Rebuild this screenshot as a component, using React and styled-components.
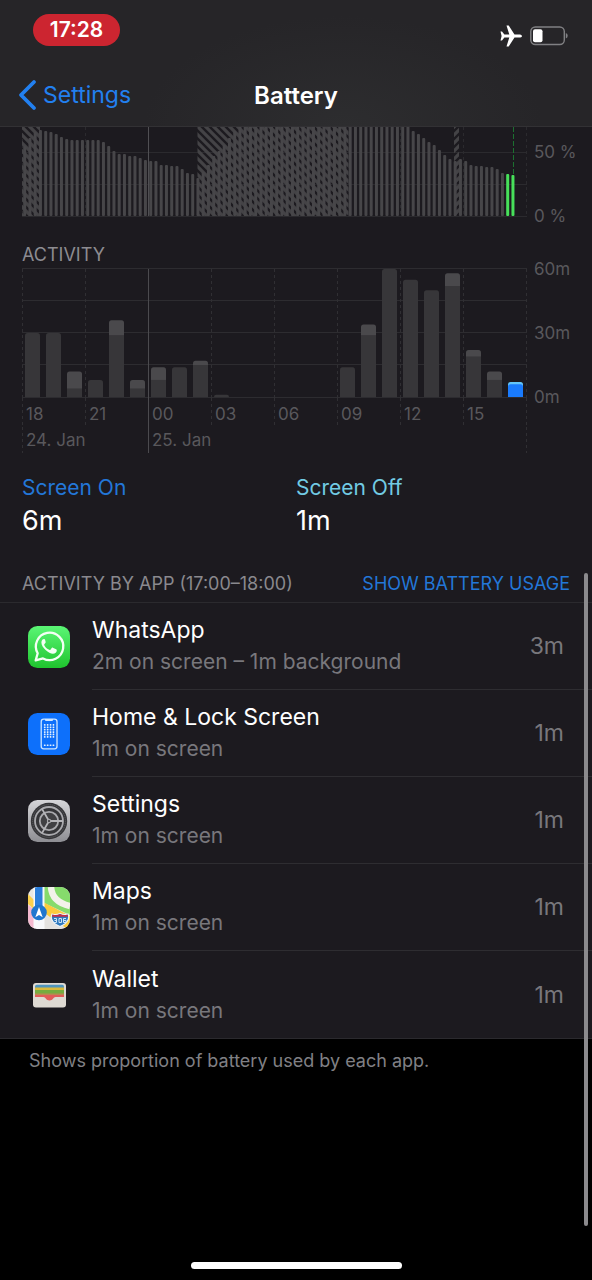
import React from "react";
import styled, { createGlobalStyle } from "styled-components";

const GlobalStyle = createGlobalStyle`
  * { box-sizing: border-box; }
  html { scrollbar-width: none; }
  body { margin: 0; background: #000; }
  button { font: inherit; border: 0; padding: 0; background: none; cursor: pointer; }
`;

const Screen = styled.div`
  position: relative;
  display: flex;
  flex-direction: column;
  min-height: 100vh;
  background: #000;
  color: #fff;
  font-family: Inter, "Liberation Sans", sans-serif;
`;

const Header = styled.header`
  background: radial-gradient(ellipse 200px 110px at 58% 100%, #2d2d2f, #262528);
  border-bottom: 1px solid #323134;
`;

const StatusBar = styled.div`
  display: flex;
  justify-content: space-between;
  align-items: flex-start;
  height: 64px;
  padding: 14px 24px 0 33px;
`;

const TimePill = styled.time`
  width: 87px;
  border-radius: 16px;
  background: #cc2530;
  font-size: 21px;
  font-weight: 600;
  line-height: 32px;
  text-align: center;
`;

const StatusIcons = styled.div`
  display: flex;
  align-items: center;
  gap: 8px;
  height: 44px;
`;

const NavBar = styled.nav`
  display: grid;
  grid-template-columns: 1fr auto 1fr;
  align-items: center;
  height: 62px;
  padding: 0 18px;
`;

const BackLink = styled.a`
  display: flex;
  align-items: center;
  gap: 6px;
  color: #2280f0;
  font-size: 23px;
  text-decoration: none;
`;

const NavTitle = styled.h1`
  margin: 0;
  font-size: 24px;
  font-weight: 600;
`;

const Panel = styled.main`
  background: #1c1a1f;
  border-bottom: 1px solid #2b2a2e;
`;

const ChartRow = styled.div`
  display: grid;
  grid-template-columns: minmax(0, 1fr) 65px;
  padding-left: 22px;
`;

const Plot = styled.svg`
  display: block;
  width: 100%;
`;

const Axis = styled.div`
  display: flex;
  flex-direction: column;
  justify-content: ${(p) => (p.$end ? "flex-end" : "space-between")};
  gap: ${(p) => (p.$end ? 44 : 0)}px;
  margin: -9px 0;
  padding-left: 7px;
  color: #59585c;
  font-size: 17px;
  line-height: 20px;
`;

const ChartTitle = styled.h2`
  margin: 0;
  padding: 28px 22px 3px;
  color: #8d8c91;
  font-size: 18px;
  font-weight: 400;
  line-height: 20px;
`;

const Ticks = styled.div`
  display: grid;
  grid-template-columns: repeat(${(p) => p.$columns}, 1fr) 1px;
  color: #59585c;
  font-size: 17px;
  line-height: 20px;
`;

const tickLines = {
  none: "none",
  solid: "linear-gradient(#4b4a4e, #4b4a4e)",
  dashed: "repeating-linear-gradient(#302f33 0 3px, transparent 3px 6px)",
};

const Tick = styled.span`
  height: ${(p) => p.$height}px;
  padding: ${(p) => p.$height - 23}px 0 0 4px;
  white-space: nowrap;
  background: ${(p) => tickLines[p.$line || "dashed"]} left / 1px 100% no-repeat;
`;

const Totals = styled.dl`
  display: grid;
  grid-template-columns: 1fr 1fr;
  margin: 0;
  padding: 22px 22px 24px;
`;

const Total = styled.div`
  dt {
    color: ${(p) => p.$color};
    font-size: 21px;
    line-height: 26px;
  }
  dd {
    margin: 0;
    font-size: 27px;
    line-height: 40px;
  }
`;

const ListHeader = styled.div`
  display: flex;
  justify-content: space-between;
  align-items: center;
  height: 38px;
  padding: 0 22px;
  border-bottom: 1px solid #2b2a2e;
  font-size: 18px;
  color: #8a898e;
`;

const ListTitle = styled.h2`
  margin: 0;
  font-size: inherit;
  font-weight: 400;
`;

const UsageButton = styled.button`
  color: #2377d8;
`;

const AppList = styled.ul`
  margin: 0;
  padding: 0;
  list-style: none;
`;

const AppRow = styled.li`
  display: flex;
  gap: 22px;
  padding-left: 28px;
  > svg { margin-top: 23px; }
`;

const AppBody = styled.div`
  display: flex;
  flex: 1;
  justify-content: space-between;
  align-items: center;
  height: 87px;
  padding-right: 28px;
  border-bottom: ${(p) => (p.$last ? 0 : 1)}px solid #2e2d31;
`;

const AppName = styled.div`
  font-size: 23px;
  line-height: 32px;
`;

const AppDetail = styled.div`
  color: #78777c;
  font-size: 21px;
  line-height: 32px;
`;

const AppTime = styled.div`
  color: #78777c;
  font-size: 23px;
`;

const Footnote = styled.p`
  margin: 0;
  padding: 10px 29px;
  color: #808085;
  font-size: 18px;
  line-height: 24px;
`;

const HomeIndicator = styled.div`
  width: 211px;
  height: 7px;
  margin: auto auto 11px;
  border-radius: 4px;
  background: #fff;
`;

const ScrollThumb = styled.div`
  position: absolute;
  top: 573px;
  right: 4px;
  bottom: 54px;
  width: 4px;
  border-radius: 2px;
  background: #8b8a8d;
`;

/* Height of each quarter-hour battery bar, from 18:00; 91 reaches past the top edge. */
const levels = [
  70, 78, 84, 86, 85, 84, 82, 79, 77, 76, 76, 76, 76, 76, 76, 74, 70, 65, 62, 62,
  60, 60, 58, 56, 55, 55, 51, 51, 50, 50, 47, 43, 42, 38, 44, 51, 60, 65, 71, 78,
  85, ...Array(32).fill(91), 91, 85, 82, 78, 74, 71, 66, 61, 57, 55, 57, 55, 51, 50,
  50, 49, 49, 47, 43, 42, 41,
];

function BatteryLevelChart() {
  return (
    <Plot viewBox="0 0 505 90" role="img" aria-label="Battery level">
      <defs>
        <pattern id="charging" width="8" height="8" patternUnits="userSpaceOnUse">
          <path d="M-2 -2L10 10M-2 6L2 10M6 -2L10 2" stroke="#444346" strokeWidth="3.2" />
        </pattern>
        <pattern id="charged" width="8" height="8" patternUnits="userSpaceOnUse">
          <path d="M-2 10L10 -2M-2 2L2 -2M6 10L10 6" stroke="#444346" strokeWidth="3.2" />
        </pattern>
      </defs>
      <g stroke="#2b2a2e">
        <path d="M0 25.5H505M0 57.5H505M0 89.5H505" />
        <path d="M.5 0V89M63.5 0V89M378.5 0V89M441.5 0V89M504.5 0V89" strokeDasharray="3 3" />
      </g>
      <rect x="0" y="0" width="18" height="89" fill="url(#charging)" />
      <rect x="175.5" y="0" width="151" height="89" fill="url(#charging)" />
      <rect x="432" y="0" width="5" height="89" fill="url(#charged)" />
      {levels.map((level, i) => (
        <rect
          key={i}
          x={1.2 + i * 5.25}
          y={89 - level}
          width="3"
          height={level}
          rx="1"
          fill={i > 91 ? "#47e05a" : "#474649"}
        />
      ))}
      <path d="M126.5 0V89" stroke="#504f53" />
      <path d="M491.5 0V47" stroke="#1c7030" strokeDasharray="5 2" />
    </Plot>
  );
}

/* Minutes per hour: [screen on, screen off]. */
const activity = [
  [30, 0], [30, 0], [4, 8], [8, 0], [29, 7], [4, 4], [8, 6], [14, 0],
  [15, 2], [1, 0], [0, 0], [0, 0], [0, 0], [0, 0], [0, 0], [14, 0],
  [29, 5], [60, 0], [55, 0], [50, 0], [52, 6], [19, 3], [8, 4], [6, 1],
];

function ActivityBar({ index, on, off }) {
  const scale = 128 / 60;
  const x = 3 + index * 21;
  const total = (on + off) * scale;
  const top = 129 - total;
  const selected = index === 23;
  if (!total) return null;
  const shape = (y) => {
    const r = Math.min(2.5, 129 - y);
    return `M${x} 129V${y + r}q0 ${-r} ${r} ${-r}h${15 - 2 * r}q${r} 0 ${r} ${r}V129z`;
  };
  return (
    <>
      {off > 0 && <path d={shape(top)} fill={selected ? "#63c6fa" : "#4a494c"} />}
      <path
        d={off > 0 && !selected ? `M${x} 129v${-on * scale}h15V129z` : shape(129 - on * scale)}
        fill={selected ? "#1a7bfd" : "#373639"}
      />
    </>
  );
}

function ActivityChart() {
  return (
    <Plot viewBox="0 0 505 130" role="img" aria-label="Activity per hour">
      <path d="M0 .5H505M0 32.5H505M0 64.5H505M0 96.5H505M0 129.5H505" stroke="#2d2c30" />
      <path
        d="M.5 1V130M63.5 1V130M189.5 1V130M252.5 1V130M315.5 1V130M378.5 1V130M441.5 1V130M504.5 1V130"
        stroke="#302f33"
        strokeDasharray="3 3"
      />
      {activity.map(([on, off], i) => (
        <ActivityBar key={i} index={i} on={on} off={off} />
      ))}
      <path d="M126.5 1V130" stroke="#4b4a4e" />
    </Plot>
  );
}

function PlaneIcon() {
  return (
    <svg width="22" height="22" viewBox="0 0 22 22" fill="#fff" aria-label="Airplane mode">
      <path d="M22 11c0-1-1.300-1.600-3-1.600h-4.500L8.700.6H6.500l2.800 8.800H4.400L2 6.500H.5L1.600 11 .5 15.500H2l2.400-2.900h4.900L6.500 21.400h2.200l5.800-8.800H19c1.700 0 3-.6 3-1.600z" />
    </svg>
  );
}

function BatteryIcon() {
  return (
    <svg width="38" height="20" viewBox="0 0 38 20" aria-label="Battery low">
      <rect x=".8" y="1" width="33.5" height="17.5" rx="4.5" fill="none" stroke="#808083" strokeWidth="1.4" />
      <rect x="3" y="3.3" width="9.5" height="13" rx="2" fill="#fff" />
      <path d="M35.8 7v5.500q1.900-.7 1.900-2.700T35.800 7z" fill="#808083" />
    </svg>
  );
}

function WhatsAppIcon() {
  return (
    <svg width="42" height="42" viewBox="0 0 42 42" aria-hidden="true">
      <defs>
        <linearGradient id="wa" x2="0" y2="1">
          <stop stopColor="#5bf675" />
          <stop offset="1" stopColor="#1fc42e" />
        </linearGradient>
      </defs>
      <rect width="42" height="42" rx="9.5" fill="url(#wa)" />
      <path d="M7.700 34.400l2-7.200a13.700 13.700 0 1 1 5.300 5.200z" fill="none" stroke="#f4fff4" strokeWidth="2.3" strokeLinejoin="round" />
      <path d="M17.100 13.900c-.4-.9-.8-.8-1.200-.8-.9 0-2.500 1-2.500 3.500 0 2.700 1.900 5.200 4.200 7.500 2.500 2.400 5.200 3.700 7.300 3.700 2.300 0 3.900-1.500 3.900-3.500 0-.6-.1-.8-.7-1.100l-3.200-1.500c-.6-.2-.8-.1-1.200.4l-1.300 1.600c-.3.300-.6.400-1.100.1-2.300-1-4-2.700-5-4.600-.3-.5-.1-.8.2-1.100l1-1.300c.2-.4.2-.6.1-1z" fill="#f4fff4" />
    </svg>
  );
}

function HomeScreenIcon() {
  const dots = [];
  for (let r = 0; r < 6; r++)
    for (let c = 0; c < 4; c++) dots.push([15.9 + c * 2.9, 11 + r * 2.4]);
  for (let c = 0; c < 4; c++) dots.push([15.9 + c * 2.9, 31.4]);
  return (
    <svg width="42" height="42" viewBox="0 0 42 42" aria-hidden="true">
      <rect width="42" height="42" rx="9.5" fill="#0d70fb" />
      <rect x="13.2" y="6.2" width="15.8" height="29.6" rx="2.5" fill="none" stroke="#cfe6ff" strokeWidth="1.3" />
      <path d="M17 6h8v1q0 1-1 1h-6q-1 0-1-1z" fill="#cfe6ff" />
      {dots.map(([x, y]) => (
        <rect key={`${x}-${y}`} x={x} y={y} width="1.7" height="1.7" rx=".4" fill="#e4f1ff" />
      ))}
    </svg>
  );
}

function SettingsIcon() {
  return (
    <svg width="42" height="42" viewBox="0 0 42 42" aria-hidden="true">
      <defs>
        <linearGradient id="steel" x2="0" y2="1">
          <stop stopColor="#d5d5d8" />
          <stop offset="1" stopColor="#8e8e93" />
        </linearGradient>
      </defs>
      <rect width="42" height="42" rx="9.5" fill="url(#steel)" />
      <circle cx="21" cy="21" r="18.2" fill="#353538" />
      <circle cx="21" cy="21" r="16.4" fill="none" stroke="#5c5c60" strokeWidth="1" strokeDasharray="1.2 .8" />
      <circle cx="21" cy="21" r="14" fill="none" stroke="#a9a9ad" strokeWidth="1.8" />
      <circle cx="21" cy="21" r="9.2" fill="#404043" stroke="#a9a9ad" strokeWidth="1.8" />
      <path d="M21 21H35M21 21l-7-12.100M21 21l-7 12.100" stroke="#b4b4b8" strokeWidth="1.8" />
      <circle cx="21" cy="21" r="2.2" fill="#a9a9ad" />
      <circle cx="21" cy="21" r="1" fill="#353538" />
    </svg>
  );
}

function MapsIcon() {
  return (
    <svg width="42" height="42" viewBox="0 0 42 42" aria-hidden="true">
      <defs>
        <clipPath id="tile"><rect width="42" height="42" rx="9.5" /></clipPath>
      </defs>
      <g clipPath="url(#tile)">
        <rect width="42" height="42" fill="#e9e7e2" />
        <path d="M16 0H42V28L16 16z" fill="#86db6c" />
        <path d="M23 0q1 15 19 19" fill="none" stroke="#f3f2ea" strokeWidth="6.5" />
        <path d="M0 18l7 5v19H0z" fill="#f4b9cf" />
        <path d="M0 7l8 8v9L0 17z" fill="#fbd04c" />
        <path d="M15 15l27 14v13h-3L15 25z" fill="#fbcb3e" />
        <path d="M15 26l24 16H15z" fill="#e4e2df" />
        <path d="M5.5 0h11v42h-11z" fill="#f7f8fa" />
        <path d="M7 0h7.500v22H7z" fill="#2c7fdb" />
        <circle cx="11" cy="25.5" r="7.8" fill="#1f76cf" />
        <path d="M11 20l3.700 10.200L11 28l-3.700 2.200z" fill="#fff" />
        <path d="M24 27q4 1.500 8-.5 4 2 8 .5 1.500 3 0 6-2.200 4.500-8 6.500-5.800-2-8-6.500-1.500-3 0-6z" fill="#2e78bd" stroke="#eef3f7" strokeWidth="1.2" />
        <path d="M24.500 27.500q4 1.200 7.500-.4 3.500 1.600 7.500.4l.5 2.300H24z" fill="#c02f4c" />
        <path d="M26 31.500h2.500v4H26M26.500 33.500h2M31 31.500h2.500v4H31zM38 31.500h-2.500v4H38v-2h-2.500" fill="none" stroke="#cfe4f5" strokeWidth="1" />
      </g>
    </svg>
  );
}

function WalletIcon() {
  return (
    <svg width="42" height="42" viewBox="0 0 42 42" aria-hidden="true">
      <rect x="5" y="9" width="33" height="24.5" rx="3" fill="#dedad3" />
      <path d="M7 14v-1.500q0-1.700 1.700-1.700h25.600q1.700 0 1.700 1.700V14z" fill="#4f95bd" />
      <path d="M7 13.500h29v3.500H7z" fill="#d9b93a" />
      <path d="M7 16h29v4H7z" fill="#75ac3e" />
      <path d="M7 19.500h29v3H7z" fill="#b98850" />
      <path d="M7 21h29v2h-8.500c-2 0-2.600 3.500-6 3.500s-4-3.500-6-3.500H7z" fill="#e15b58" />
    </svg>
  );
}

const apps = [
  { name: "WhatsApp", detail: "2m on screen – 1m background", time: "3m", Icon: WhatsAppIcon },
  { name: "Home & Lock Screen", detail: "1m on screen", time: "1m", Icon: HomeScreenIcon },
  { name: "Settings", detail: "1m on screen", time: "1m", Icon: SettingsIcon },
  { name: "Maps", detail: "1m on screen", time: "1m", Icon: MapsIcon },
  { name: "Wallet", detail: "1m on screen", time: "1m", Icon: WalletIcon },
];

const hours = ["18", "21", "00", "03", "06", "09", "12", "15"];

export default function App() {
  return (
    <Screen>
      <GlobalStyle />
      <Header>
        <StatusBar>
          <TimePill>17:28</TimePill>
          <StatusIcons>
            <PlaneIcon />
            <BatteryIcon />
          </StatusIcons>
        </StatusBar>
        <NavBar>
          <BackLink href="#settings">
            <svg width="19" height="32" viewBox="0 0 19 32" fill="none" aria-hidden="true">
              <path d="M16 3L3 16l13 13" stroke="#2280f0" strokeWidth="3.8" strokeLinecap="round" strokeLinejoin="round" />
            </svg>
            Settings
          </BackLink>
          <NavTitle>Battery</NavTitle>
        </NavBar>
      </Header>
      <Panel>
        <ChartRow>
          <BatteryLevelChart />
          <Axis $end>
            <span>50 %</span>
            <span>0 %</span>
          </Axis>
        </ChartRow>
        <ChartTitle>ACTIVITY</ChartTitle>
        <ChartRow>
          <ActivityChart />
          <Axis>
            <span>60m</span>
            <span>30m</span>
            <span>0m</span>
          </Axis>
          <div>
            <Ticks $columns={8}>
              {hours.map((hour) => (
                <Tick key={hour} $height={29} $line={hour === "00" ? "solid" : "dashed"}>{hour}</Tick>
              ))}
              <Tick $height={29} />
            </Ticks>
            <Ticks $columns={4}>
              <Tick $height={26}>24. Jan</Tick>
              <Tick $height={26} $line="solid">25. Jan</Tick>
              <Tick $height={26} $line="none" />
              <Tick $height={26} $line="none" />
              <Tick $height={26} />
            </Ticks>
          </div>
        </ChartRow>
        <Totals>
          <Total $color="#2377d8">
            <dt>Screen On</dt>
            <dd>6m</dd>
          </Total>
          <Total $color="#72cbe4">
            <dt>Screen Off</dt>
            <dd>1m</dd>
          </Total>
        </Totals>
        <ListHeader>
          <ListTitle>ACTIVITY BY APP (17:00–18:00)</ListTitle>
          <UsageButton type="button">SHOW BATTERY USAGE</UsageButton>
        </ListHeader>
        <AppList>
          {apps.map(({ name, detail, time, Icon }, i) => (
            <AppRow key={name}>
              <Icon />
              <AppBody $last={i === apps.length - 1}>
                <div>
                  <AppName>{name}</AppName>
                  <AppDetail>{detail}</AppDetail>
                </div>
                <AppTime>{time}</AppTime>
              </AppBody>
            </AppRow>
          ))}
        </AppList>
      </Panel>
      <Footnote>Shows proportion of battery used by each app.</Footnote>
      <HomeIndicator />
      <ScrollThumb />
    </Screen>
  );
}
